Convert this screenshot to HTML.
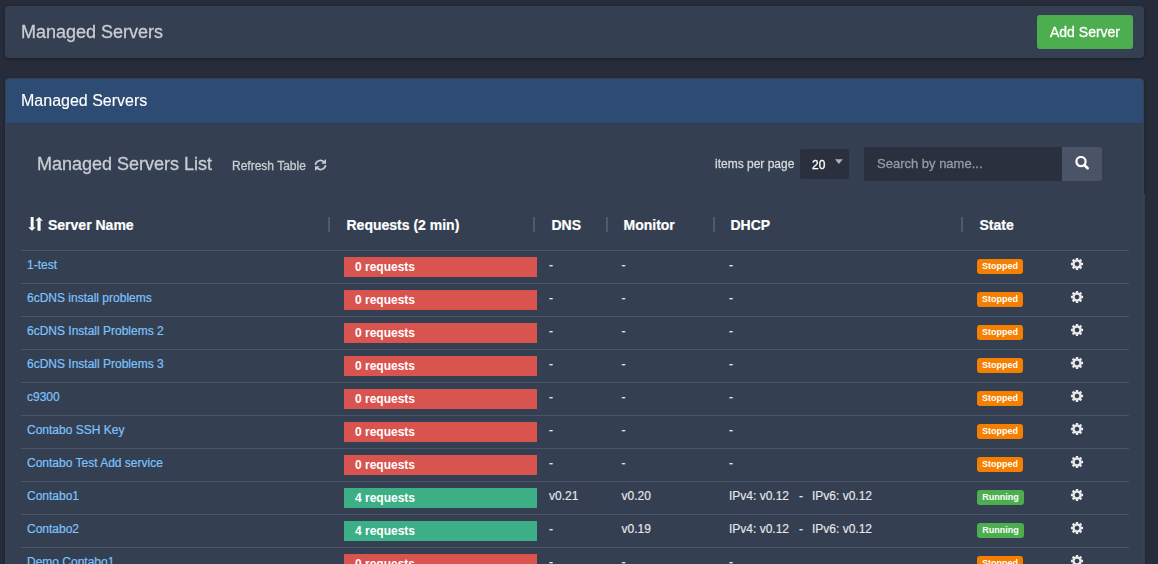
<!DOCTYPE html>
<html><head><meta charset="utf-8">
<style>
*{box-sizing:border-box;margin:0;padding:0}
html,body{width:1158px;height:564px;overflow:hidden;background:#262c3a;font-family:"Liberation Sans",sans-serif;position:relative}
.abs{position:absolute;white-space:nowrap}
.p1{position:absolute;left:5px;top:6px;width:1139px;height:52px;background:#353f52;border-radius:4px;box-shadow:0 1px 3px rgba(0,0,0,.35);}
.p1 .t{position:absolute;left:16px;top:16px;font-size:18px;line-height:21px;color:#c9cdd3;}
.btn{position:absolute;left:1032px;top:9px;width:96px;height:34px;background:#4cae4f;border-radius:3px;color:#fff;font-size:14px;line-height:34px;text-align:center;}
.p2{position:absolute;left:5px;top:78px;width:1139px;height:500px;background:#353f52;border:1px solid #394155;border-radius:4px 4px 0 0;box-shadow:0 1px 3px rgba(0,0,0,.35);}
.ext{position:absolute;left:1144px;top:194px;width:1px;height:400px;background:#353f52}
.p2 .hd{position:absolute;left:0;top:0;width:100%;height:45px;background:#2e4b73;border-bottom:1px solid #343b4e;border-radius:3px 3px 0 0}
.p2 .hd span{position:absolute;left:15px;top:12px;font-size:16px;line-height:19px;color:#fff;}
.msl{left:37px;top:154px;font-size:18px;line-height:21px;color:#c9cdd3}
.rt{left:232px;top:159px;font-size:12px;line-height:14px;color:#c9cdd3}
.ref{position:absolute;left:314px;top:158px}
.ipp{left:715px;top:157px;font-size:12px;line-height:14px;color:#d5d8dd}
.sel{left:800px;top:149px;width:49px;height:30px;background:#2a303e;border-radius:3px;}
.sel span{position:absolute;left:11.5px;top:9px;font-size:12px;line-height:14px;color:#fff}
.sel svg{position:absolute;left:34px;top:10px}
.srch{left:864px;top:147px;width:198px;height:34px;background:#2a303e;}
.srch span{position:absolute;left:13px;top:9px;font-size:13px;line-height:15px;color:#979ca5}
.sbtn{left:1062px;top:147px;width:40px;height:34px;background:#4b5466;border-radius:0 3px 3px 0}
.sbtn svg{position:absolute;left:12px;top:9px}
.th{-webkit-text-stroke:0.2px #fff;position:absolute;top:217px;font-size:14px;line-height:16px;font-weight:bold;color:#fff;white-space:nowrap}
.sep{position:absolute;top:217px;width:2px;height:15px;background:#515a6b}
.sort{position:absolute;left:28px;top:216px}
.line{position:absolute;left:21px;width:1108px;height:1px;background:#4a5467}
.row{position:absolute;left:0;width:1158px;height:33px}
.lnk{-webkit-text-stroke:0.2px currentColor;position:absolute;left:27px;top:8px;font-size:12px;line-height:14px;color:#7cc3fc;white-space:nowrap}
.bar{position:absolute;left:344px;top:7px;width:193px;height:20px}
.bar.r{background:#d9534f}.bar.g{background:#3daf87}
.bar span{position:absolute;left:11px;top:3px;font-size:12px;line-height:14px;font-weight:bold;color:#fff;white-space:nowrap}
.c{-webkit-text-stroke:0.15px currentColor;position:absolute;top:8px;font-size:12px;line-height:14px;color:#e6e8eb;white-space:nowrap}
.dns{left:549px}.mon{left:621.5px}.dh{left:729px}
.dh .dsh{position:absolute;left:70px}.dh .v6{position:absolute;left:83px}
.badge{position:absolute;left:977px;top:9px;width:46px;height:15px;border-radius:3px;font-size:9px;line-height:15px;font-weight:bold;color:#fff;text-align:center}
.stop{background:#f57f00}.run{background:#4cae4f;width:47px}
.gear{position:absolute;left:1070px;top:7px}
.gs{will-change:transform}
.thk{-webkit-text-stroke:0.3px currentColor}
</style></head><body>
<div class="p1"><div class="t gs thk">Managed Servers</div><div class="btn"><span class="gs thk" style="display:inline-block">Add Server</span></div></div>
<div class="p2"><div class="hd"><span class="gs" style="-webkit-text-stroke:0.12px #fff">Managed Servers</span></div></div>
<div class="ext"></div>
<div class="abs msl gs thk">Managed Servers List</div>
<div class="abs rt gs thk">Refresh Table</div>
<svg class="ref" width="13" height="14" viewBox="0 0 13 13"><g fill="none" stroke="#c9cdd3" stroke-width="1.7"><path d="M1.4 6.3A5 5 0 0 1 10 3.6"/><path d="M11.6 6.7A5 5 0 0 1 3 9.4"/></g><g fill="#c9cdd3"><path d="M7.3 5.3L12 5.3 12 0.6z"/><path d="M5.7 7.7L1 7.7 1 12.4z"/></g></svg>
<div class="abs ipp gs thk">items per page</div>
<div class="abs sel"><span class="gs thk">20</span><svg width="10" height="6" viewBox="0 0 10 6"><path d="M1 0.2H8.8L4.9 5z" fill="#aeb3bb"/></svg></div>
<div class="abs srch"><span class="gs thk">Search by name...</span></div>
<div class="abs sbtn"><svg width="16" height="16" viewBox="0 0 16 16"><circle cx="7" cy="5.6" r="4.6" fill="none" stroke="#fff" stroke-width="2.2"/><path d="M10.4 9L13.6 12.2" stroke="#fff" stroke-width="2.7" stroke-linecap="round"/></svg></div>
<svg class="sort" width="16" height="16" viewBox="0 0 16 16"><g fill="#fff"><rect x="2.7" y="1" width="2.9" height="10.5"/><path d="M0.3 11.3H7.7L4 14.8z"/><path d="M7.3 4.7H14.9L11.1 0.9z"/><rect x="9.5" y="4.5" width="3.1" height="10.2"/></g></svg>
<div class="th" style="left:48px">Server Name</div>
<div class="sep" style="left:328px"></div>
<div class="th" style="left:346.5px">Requests (2 min)</div>
<div class="sep" style="left:533px"></div>
<div class="th" style="left:551.5px">DNS</div>
<div class="sep" style="left:606px"></div>
<div class="th" style="left:623.5px">Monitor</div>
<div class="sep" style="left:713px"></div>
<div class="th" style="left:730.5px">DHCP</div>
<div class="sep" style="left:961px"></div>
<div class="th" style="left:979.5px">State</div>
<div class="line" style="top:250px"></div>
<div class="line" style="top:283px"></div>
<div class="line" style="top:316px"></div>
<div class="line" style="top:349px"></div>
<div class="line" style="top:382px"></div>
<div class="line" style="top:415px"></div>
<div class="line" style="top:448px"></div>
<div class="line" style="top:481px"></div>
<div class="line" style="top:514px"></div>
<div class="line" style="top:547px"></div>
<div class="row" style="top:250px">
<a class="lnk">1-test</a>
<div class="bar r"><span>0 requests</span></div>
<div class="c dns">-</div>
<div class="c mon">-</div>
<div class="c dh">-</div>
<div class="badge stop">Stopped</div>
<svg class="gear" width="14" height="14" viewBox="0 0 14 14"><path fill="#e8e8e8" fill-rule="evenodd" d="M5.78 2.46 L5.82 0.91 L8.18 0.91 L8.22 2.46 L9.35 2.93 L10.47 1.86 L12.14 3.53 L11.07 4.65 L11.54 5.78 L13.09 5.82 L13.09 8.18 L11.54 8.22 L11.07 9.35 L12.14 10.47 L10.47 12.14 L9.35 11.07 L8.22 11.54 L8.18 13.09 L5.82 13.09 L5.78 11.54 L4.65 11.07 L3.53 12.14 L1.86 10.47 L2.93 9.35 L2.46 8.22 L0.91 8.18 L0.91 5.82 L2.46 5.78 L2.93 4.65 L1.86 3.53 L3.53 1.86 L4.65 2.93Z M7 4.7 A2.3 2.3 0 1 0 7.001 4.7Z"/></svg>
</div>
<div class="row" style="top:283px">
<a class="lnk">6cDNS install problems</a>
<div class="bar r"><span>0 requests</span></div>
<div class="c dns">-</div>
<div class="c mon">-</div>
<div class="c dh">-</div>
<div class="badge stop">Stopped</div>
<svg class="gear" width="14" height="14" viewBox="0 0 14 14"><path fill="#e8e8e8" fill-rule="evenodd" d="M5.78 2.46 L5.82 0.91 L8.18 0.91 L8.22 2.46 L9.35 2.93 L10.47 1.86 L12.14 3.53 L11.07 4.65 L11.54 5.78 L13.09 5.82 L13.09 8.18 L11.54 8.22 L11.07 9.35 L12.14 10.47 L10.47 12.14 L9.35 11.07 L8.22 11.54 L8.18 13.09 L5.82 13.09 L5.78 11.54 L4.65 11.07 L3.53 12.14 L1.86 10.47 L2.93 9.35 L2.46 8.22 L0.91 8.18 L0.91 5.82 L2.46 5.78 L2.93 4.65 L1.86 3.53 L3.53 1.86 L4.65 2.93Z M7 4.7 A2.3 2.3 0 1 0 7.001 4.7Z"/></svg>
</div>
<div class="row" style="top:316px">
<a class="lnk">6cDNS Install Problems 2</a>
<div class="bar r"><span>0 requests</span></div>
<div class="c dns">-</div>
<div class="c mon">-</div>
<div class="c dh">-</div>
<div class="badge stop">Stopped</div>
<svg class="gear" width="14" height="14" viewBox="0 0 14 14"><path fill="#e8e8e8" fill-rule="evenodd" d="M5.78 2.46 L5.82 0.91 L8.18 0.91 L8.22 2.46 L9.35 2.93 L10.47 1.86 L12.14 3.53 L11.07 4.65 L11.54 5.78 L13.09 5.82 L13.09 8.18 L11.54 8.22 L11.07 9.35 L12.14 10.47 L10.47 12.14 L9.35 11.07 L8.22 11.54 L8.18 13.09 L5.82 13.09 L5.78 11.54 L4.65 11.07 L3.53 12.14 L1.86 10.47 L2.93 9.35 L2.46 8.22 L0.91 8.18 L0.91 5.82 L2.46 5.78 L2.93 4.65 L1.86 3.53 L3.53 1.86 L4.65 2.93Z M7 4.7 A2.3 2.3 0 1 0 7.001 4.7Z"/></svg>
</div>
<div class="row" style="top:349px">
<a class="lnk">6cDNS Install Problems 3</a>
<div class="bar r"><span>0 requests</span></div>
<div class="c dns">-</div>
<div class="c mon">-</div>
<div class="c dh">-</div>
<div class="badge stop">Stopped</div>
<svg class="gear" width="14" height="14" viewBox="0 0 14 14"><path fill="#e8e8e8" fill-rule="evenodd" d="M5.78 2.46 L5.82 0.91 L8.18 0.91 L8.22 2.46 L9.35 2.93 L10.47 1.86 L12.14 3.53 L11.07 4.65 L11.54 5.78 L13.09 5.82 L13.09 8.18 L11.54 8.22 L11.07 9.35 L12.14 10.47 L10.47 12.14 L9.35 11.07 L8.22 11.54 L8.18 13.09 L5.82 13.09 L5.78 11.54 L4.65 11.07 L3.53 12.14 L1.86 10.47 L2.93 9.35 L2.46 8.22 L0.91 8.18 L0.91 5.82 L2.46 5.78 L2.93 4.65 L1.86 3.53 L3.53 1.86 L4.65 2.93Z M7 4.7 A2.3 2.3 0 1 0 7.001 4.7Z"/></svg>
</div>
<div class="row" style="top:382px">
<a class="lnk">c9300</a>
<div class="bar r"><span>0 requests</span></div>
<div class="c dns">-</div>
<div class="c mon">-</div>
<div class="c dh">-</div>
<div class="badge stop">Stopped</div>
<svg class="gear" width="14" height="14" viewBox="0 0 14 14"><path fill="#e8e8e8" fill-rule="evenodd" d="M5.78 2.46 L5.82 0.91 L8.18 0.91 L8.22 2.46 L9.35 2.93 L10.47 1.86 L12.14 3.53 L11.07 4.65 L11.54 5.78 L13.09 5.82 L13.09 8.18 L11.54 8.22 L11.07 9.35 L12.14 10.47 L10.47 12.14 L9.35 11.07 L8.22 11.54 L8.18 13.09 L5.82 13.09 L5.78 11.54 L4.65 11.07 L3.53 12.14 L1.86 10.47 L2.93 9.35 L2.46 8.22 L0.91 8.18 L0.91 5.82 L2.46 5.78 L2.93 4.65 L1.86 3.53 L3.53 1.86 L4.65 2.93Z M7 4.7 A2.3 2.3 0 1 0 7.001 4.7Z"/></svg>
</div>
<div class="row" style="top:415px">
<a class="lnk">Contabo SSH Key</a>
<div class="bar r"><span>0 requests</span></div>
<div class="c dns">-</div>
<div class="c mon">-</div>
<div class="c dh">-</div>
<div class="badge stop">Stopped</div>
<svg class="gear" width="14" height="14" viewBox="0 0 14 14"><path fill="#e8e8e8" fill-rule="evenodd" d="M5.78 2.46 L5.82 0.91 L8.18 0.91 L8.22 2.46 L9.35 2.93 L10.47 1.86 L12.14 3.53 L11.07 4.65 L11.54 5.78 L13.09 5.82 L13.09 8.18 L11.54 8.22 L11.07 9.35 L12.14 10.47 L10.47 12.14 L9.35 11.07 L8.22 11.54 L8.18 13.09 L5.82 13.09 L5.78 11.54 L4.65 11.07 L3.53 12.14 L1.86 10.47 L2.93 9.35 L2.46 8.22 L0.91 8.18 L0.91 5.82 L2.46 5.78 L2.93 4.65 L1.86 3.53 L3.53 1.86 L4.65 2.93Z M7 4.7 A2.3 2.3 0 1 0 7.001 4.7Z"/></svg>
</div>
<div class="row" style="top:448px">
<a class="lnk">Contabo Test Add service</a>
<div class="bar r"><span>0 requests</span></div>
<div class="c dns">-</div>
<div class="c mon">-</div>
<div class="c dh">-</div>
<div class="badge stop">Stopped</div>
<svg class="gear" width="14" height="14" viewBox="0 0 14 14"><path fill="#e8e8e8" fill-rule="evenodd" d="M5.78 2.46 L5.82 0.91 L8.18 0.91 L8.22 2.46 L9.35 2.93 L10.47 1.86 L12.14 3.53 L11.07 4.65 L11.54 5.78 L13.09 5.82 L13.09 8.18 L11.54 8.22 L11.07 9.35 L12.14 10.47 L10.47 12.14 L9.35 11.07 L8.22 11.54 L8.18 13.09 L5.82 13.09 L5.78 11.54 L4.65 11.07 L3.53 12.14 L1.86 10.47 L2.93 9.35 L2.46 8.22 L0.91 8.18 L0.91 5.82 L2.46 5.78 L2.93 4.65 L1.86 3.53 L3.53 1.86 L4.65 2.93Z M7 4.7 A2.3 2.3 0 1 0 7.001 4.7Z"/></svg>
</div>
<div class="row" style="top:481px">
<a class="lnk">Contabo1</a>
<div class="bar g"><span>4 requests</span></div>
<div class="c dns">v0.21</div>
<div class="c mon">v0.20</div>
<div class="c dh"><span>IPv4: v0.12</span><span class="dsh">-</span><span class="v6">IPv6: v0.12</span></div>
<div class="badge run">Running</div>
<svg class="gear" width="14" height="14" viewBox="0 0 14 14"><path fill="#e8e8e8" fill-rule="evenodd" d="M5.78 2.46 L5.82 0.91 L8.18 0.91 L8.22 2.46 L9.35 2.93 L10.47 1.86 L12.14 3.53 L11.07 4.65 L11.54 5.78 L13.09 5.82 L13.09 8.18 L11.54 8.22 L11.07 9.35 L12.14 10.47 L10.47 12.14 L9.35 11.07 L8.22 11.54 L8.18 13.09 L5.82 13.09 L5.78 11.54 L4.65 11.07 L3.53 12.14 L1.86 10.47 L2.93 9.35 L2.46 8.22 L0.91 8.18 L0.91 5.82 L2.46 5.78 L2.93 4.65 L1.86 3.53 L3.53 1.86 L4.65 2.93Z M7 4.7 A2.3 2.3 0 1 0 7.001 4.7Z"/></svg>
</div>
<div class="row" style="top:514px">
<a class="lnk">Contabo2</a>
<div class="bar g"><span>4 requests</span></div>
<div class="c dns">-</div>
<div class="c mon">v0.19</div>
<div class="c dh"><span>IPv4: v0.12</span><span class="dsh">-</span><span class="v6">IPv6: v0.12</span></div>
<div class="badge run">Running</div>
<svg class="gear" width="14" height="14" viewBox="0 0 14 14"><path fill="#e8e8e8" fill-rule="evenodd" d="M5.78 2.46 L5.82 0.91 L8.18 0.91 L8.22 2.46 L9.35 2.93 L10.47 1.86 L12.14 3.53 L11.07 4.65 L11.54 5.78 L13.09 5.82 L13.09 8.18 L11.54 8.22 L11.07 9.35 L12.14 10.47 L10.47 12.14 L9.35 11.07 L8.22 11.54 L8.18 13.09 L5.82 13.09 L5.78 11.54 L4.65 11.07 L3.53 12.14 L1.86 10.47 L2.93 9.35 L2.46 8.22 L0.91 8.18 L0.91 5.82 L2.46 5.78 L2.93 4.65 L1.86 3.53 L3.53 1.86 L4.65 2.93Z M7 4.7 A2.3 2.3 0 1 0 7.001 4.7Z"/></svg>
</div>
<div class="row" style="top:547px">
<a class="lnk">Demo Contabo1</a>
<div class="bar r"><span>0 requests</span></div>
<div class="c dns">-</div>
<div class="c mon">-</div>
<div class="c dh">-</div>
<div class="badge stop">Stopped</div>
<svg class="gear" width="14" height="14" viewBox="0 0 14 14"><path fill="#e8e8e8" fill-rule="evenodd" d="M5.78 2.46 L5.82 0.91 L8.18 0.91 L8.22 2.46 L9.35 2.93 L10.47 1.86 L12.14 3.53 L11.07 4.65 L11.54 5.78 L13.09 5.82 L13.09 8.18 L11.54 8.22 L11.07 9.35 L12.14 10.47 L10.47 12.14 L9.35 11.07 L8.22 11.54 L8.18 13.09 L5.82 13.09 L5.78 11.54 L4.65 11.07 L3.53 12.14 L1.86 10.47 L2.93 9.35 L2.46 8.22 L0.91 8.18 L0.91 5.82 L2.46 5.78 L2.93 4.65 L1.86 3.53 L3.53 1.86 L4.65 2.93Z M7 4.7 A2.3 2.3 0 1 0 7.001 4.7Z"/></svg>
</div>
</body></html>
